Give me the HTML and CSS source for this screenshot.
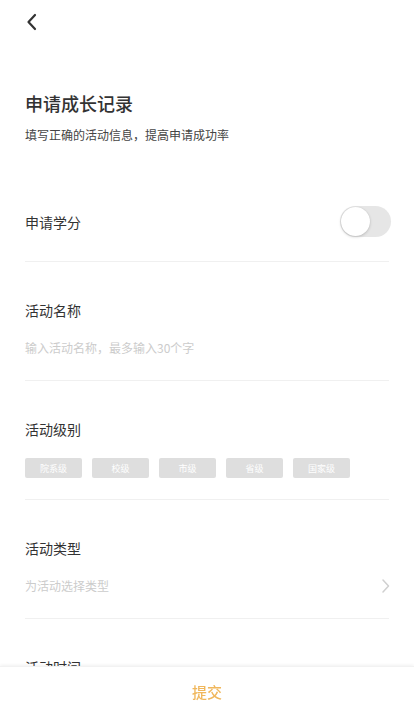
FILE: index.html
```html
<!DOCTYPE html>
<html lang="zh-CN">
<head>
<meta charset="utf-8">
<title>申请成长记录</title>
<link rel="stylesheet" href="styles.css">
</head>
<body>
<div class="page">
  <div class="nav">
    <svg class="back" width="14" height="18" viewBox="0 0 14 18"><polyline points="10,2 3.5,9 10,16" fill="none" stroke="#333" stroke-width="2.2" stroke-linecap="round" stroke-linejoin="round"/></svg>
  </div>
  <div class="intro">
    <h1 class="title">申请成长记录</h1>
    <p class="subtitle">填写正确的活动信息，提高申请成功率</p>
  </div>
  <div class="row switch-row">
    <span class="label">申请学分</span>
    <span class="switch"><span class="knob"></span></span>
  </div>
  <div class="section">
    <div class="label">活动名称</div>
    <div class="input">输入活动名称，最多输入30个字</div>
  </div>
  <div class="section tags-section">
    <div class="label">活动级别</div>
    <div class="tags">
      <span class="tag">院系级</span>
      <span class="tag">校级</span>
      <span class="tag">市级</span>
      <span class="tag">省级</span>
      <span class="tag">国家级</span>
    </div>
  </div>
  <div class="section">
    <div class="label">活动类型</div>
    <div class="input select">
      <span>为活动选择类型</span>
      <svg width="10" height="14" viewBox="0 0 10 14"><polyline points="3,1 8.5,7 3,13" fill="none" stroke="#d0d0d0" stroke-width="1.5" stroke-linecap="round" stroke-linejoin="round"/></svg>
    </div>
  </div>
  <div class="section last">
    <div class="label">活动时间</div>
    <div class="input">选择活动时间</div>
  </div>
</div>
<div class="bottom-bar"><span class="submit">提交</span></div>
</body>
</html>
```
FILE: styles.css
```css
* { box-sizing: border-box; }
html, body { margin: 0; padding: 0; background: #fff; }
body {
  font-family: "Noto Sans CJK SC", "Noto Sans", sans-serif;
  color: #333;
  width: 414px;
  height: 716px;
  overflow: hidden;
}
.page { padding: 0 25px; }
.nav {
  height: 44px;
  display: flex;
  align-items: center;
}
.back { display: block; }
.intro { padding-top: 47px; }
.title {
  margin: 0;
  font-size: 18px;
  line-height: 25px;
  font-weight: 500;
  color: #333;
}
.subtitle {
  margin: 10px 0 0;
  font-size: 12px;
  line-height: 17px;
  color: #444;
}
.switch-row {
  margin-top: 39px;
  height: 80px;
  display: flex;
  align-items: center;
  justify-content: space-between;
  border-bottom: 1px solid #f0f0f0;
}
.label {
  font-size: 14px;
  line-height: 20px;
  color: #333;
  font-weight: 400;
}
.switch {
  width: 51px;
  height: 31px;
  margin-right: -2px;
  border-radius: 16px;
  background: #e6e6e6;
  display: flex;
  align-items: center;
  padding-left: 1px;
}
.knob {
  width: 29px;
  height: 29px;
  border-radius: 50%;
  background: #fff;
  box-shadow: 0 1px 3px rgba(0,0,0,0.18), 0 0 1px rgba(0,0,0,0.1);
}
.section {
  padding: 38px 0 23px;
  border-bottom: 1px solid #f0f0f0;
}
.section .label { margin-bottom: 19px; }
.input {
  font-size: 12px;
  line-height: 18px;
  color: #ccc;
}
.select {
  display: flex;
  align-items: center;
  justify-content: space-between;
}
.select svg { display: block; margin-right: -1px; }
.tags-section { padding-bottom: 21px; }
.tags {
  display: flex;
  gap: 10px;
}
.tag {
  width: 57px;
  height: 20px;
  border-radius: 2px;
  background: #dedede;
  color: #fff;
  font-size: 9px;
  display: flex;
  align-items: center;
  justify-content: center;
}
.bottom-bar {
  position: fixed;
  left: 0;
  right: 0;
  bottom: 0;
  height: 50px;
  background: #fff;
  box-shadow: 0 -1px 3px rgba(0,0,0,0.06);
  border-top: 1px solid #f2f2f2;
  display: flex;
  align-items: center;
  justify-content: center;
}
.submit {
  font-size: 15px;
  color: #f0b75c;
  font-weight: 500;
}
```
